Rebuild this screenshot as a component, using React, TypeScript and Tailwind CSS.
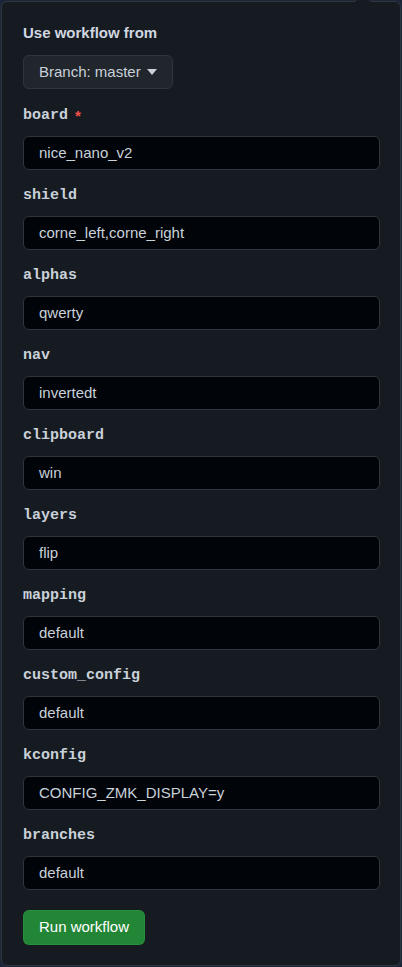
const fields: { name: string; value: string; required?: boolean }[] = [
  { name: "board", value: "nice_nano_v2", required: true },
  { name: "shield", value: "corne_left,corne_right" },
  { name: "alphas", value: "qwerty" },
  { name: "nav", value: "invertedt" },
  { name: "clipboard", value: "win" },
  { name: "layers", value: "flip" },
  { name: "mapping", value: "default" },
  { name: "custom_config", value: "default" },
  { name: "kconfig", value: "CONFIG_ZMK_DISPLAY=y" },
  { name: "branches", value: "default" },
];

export default function App() {
  return (
    <div className="w-[402px] h-[967px] bg-[#1b2739] pt-px pl-px font-['Liberation_Sans',sans-serif]">
      <div className="relative w-[400px] h-[965px] bg-[#161b22] border border-[#30363d] rounded-md p-[21px]">
        <div className="absolute -top-[7px] right-[31px] w-3 h-3 rotate-45 bg-[#161b22] border-l border-t border-[#30363d]" />
        <div className="text-[15px] leading-5 font-bold text-[#d1d7e0]">Use workflow from</div>
        <button className="mt-3 h-[34px] px-[15px] flex items-center gap-[6px] bg-[#21262d] border border-[#30363d] rounded-md text-[15px] text-[#c9d1d9]">
          Branch: master
          <svg width="10" height="6" viewBox="0 0 10 6">
            <path d="M0 0h10L5 6z" fill="#c9d1d9" />
          </svg>
        </button>
        <div className="mt-[13px] flex flex-col gap-3">
          {fields.map((f) => (
            <div key={f.name} className="flex flex-col gap-[10px]">
              <div className="h-6 pt-1 flex items-center font-['Liberation_Mono',monospace] font-bold text-[15px] text-[#c9d1d9]">
                {f.name}
                {f.required && <span className="ml-[7px] text-[#f85149] font-['Liberation_Sans',sans-serif]">*</span>}
              </div>
              <div className="h-[34px] w-[357px] flex items-center px-[15px] bg-[#010409] border border-[#30363d] rounded-md text-[15px] text-[#c9d1d9]">
                {f.value}
              </div>
            </div>
          ))}
        </div>
        <button className="mt-[20px] h-[35px] px-[15px] bg-[#238636] border border-[#2ea043]/40 rounded-md text-[15px] text-white">
          Run workflow
        </button>
      </div>
    </div>
  );
}
